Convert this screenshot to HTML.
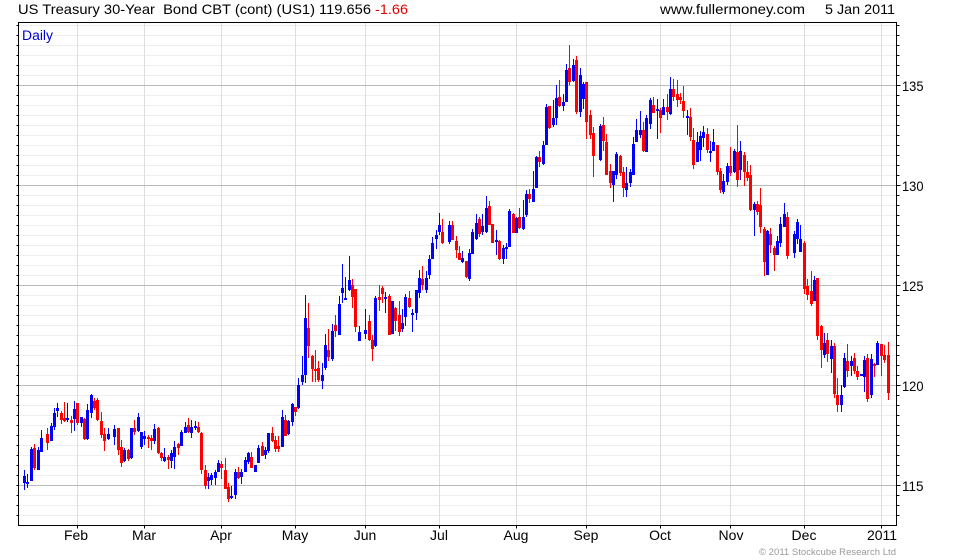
<!DOCTYPE html>
<html><head><meta charset="utf-8"><title>US Treasury 30-Year Bond</title>
<style>html,body{margin:0;padding:0;background:#fff}svg{display:block}text{font-family:"Liberation Sans",Arial,sans-serif;font-size:14px;fill:#000}</style></head>
<body>
<svg width="980" height="560" viewBox="0 0 980 560" xmlns="http://www.w3.org/2000/svg">
<g shape-rendering="crispEdges" fill="none" transform="translate(.5 .5)">
<path stroke="#eee" d="M18 25H896M18 35H896M18 45H896M18 55H896M18 65H896M18 75H896M18 95H896M18 105H896M18 115H896M18 125H896M18 135H896M18 145H896M18 155H896M18 165H896M18 175H896M18 195H896M18 205H896M18 215H896M18 225H896M18 235H896M18 245H896M18 255H896M18 265H896M18 275H896M18 295H896M18 305H896M18 315H896M18 325H896M18 335H896M18 345H896M18 355H896M18 365H896M18 375H896M18 395H896M18 405H896M18 415H896M18 425H896M18 435H896M18 445H896M18 455H896M18 465H896M18 475H896M18 495H896M18 505H896M18 515H896"/>
<path stroke="#ddd" d="M77 22V525M144 22V525M221 22V525M295 22V525M365 22V525M439 22V525M516 22V525M586 22V525M660 22V525M730 22V525M804 22V525M881 22V525"/>
<path stroke="#bbb" d="M18 85H896M18 185H896M18 285H896M18 385H896M18 485H896"/>
<path stroke="#000" d="M18 22H896V525H18ZM77 525V528M144 525V528M221 525V528M295 525V528M365 525V528M439 525V528M516 525V528M586 525V528M660 525V528M730 525V528M804 525V528M881 525V528M16 25H18M16 35H18M16 45H18M16 55H18M16 65H18M16 75H18M16 85H18M16 95H18M16 105H18M16 115H18M16 125H18M16 135H18M16 145H18M16 155H18M16 165H18M16 175H18M16 185H18M16 195H18M16 205H18M16 215H18M16 225H18M16 235H18M16 245H18M16 255H18M16 265H18M16 275H18M16 285H18M16 295H18M16 305H18M16 315H18M16 325H18M16 335H18M16 345H18M16 355H18M16 365H18M16 375H18M16 385H18M16 395H18M16 405H18M16 415H18M16 425H18M16 435H18M16 445H18M16 455H18M16 465H18M16 475H18M16 485H18M16 495H18M16 505H18M16 515H18M896 25H899M896 35H899M896 45H899M896 55H899M896 65H899M896 75H899M896 85H900M896 95H899M896 105H899M896 115H899M896 125H899M896 135H899M896 145H899M896 155H899M896 165H899M896 175H899M896 185H900M896 195H899M896 205H899M896 215H899M896 225H899M896 235H899M896 245H899M896 255H899M896 265H899M896 275H899M896 285H900M896 295H899M896 305H899M896 315H899M896 325H899M896 335H899M896 345H899M896 355H899M896 365H899M896 375H899M896 385H900M896 395H899M896 405H899M896 415H899M896 425H899M896 435H899M896 445H899M896 455H899M896 465H899M896 475H899M896 485H900M896 495H899M896 505H899M896 515H899"/>
</g>
<g shape-rendering="crispEdges" fill="none" transform="translate(.5 0)">
<path stroke="#00f" stroke-width="1" d="M24 470V490M27 474V488M31 447V481M38 447V470M41 430V452M51 423V441M54 408V430M57 403V417M67 403V422M74 401V431M81 417V427M87 404V440M91 394V418M108 428V440M114 425V445M124 448V462M131 428V459M138 413V432M141 432V449M144 431V445M154 424V444M164 448V462M171 450V468M174 441V469M181 430V446M185 422V433M191 420V438M195 421V430M208 473V489M211 473V485M215 470V485M218 460V472M231 486V499M235 469V499M241 469V484M245 457V472M248 452V464M255 465V472M258 445V463M265 447V459M268 433V453M282 410V447M288 420V435M292 403V426M298 378V409M302 356V385M305 295V383M322 363V389M325 334V370M332 324V361M339 296V335M342 264V303M345 277V300M349 256V291M359 326V341M365 309V339M375 296V347M385 292V313M392 301V334M402 309V332M405 294V326M412 309V332M416 290V320M419 270V298M426 271V293M429 255V279M432 237V259M436 230V249M439 213V235M449 221V244M462 251V263M469 249V281M472 229V254M476 214V240M482 214V235M486 196V233M496 230V255M503 245V264M506 243V259M509 209V247M516 217V233M523 200V230M526 190V217M533 171V202M536 156V188M543 141V165M546 104V145M553 100V127M556 85V125M563 94V111M566 64V102M573 59V82M580 68V117M583 82V109M600 124V161M613 171V202M616 152V179M626 167V197M630 169V187M633 137V175M636 119V142M640 111V138M646 115V152M650 98V129M657 99V139M663 99V115M670 77V115M687 110V135M697 132V162M700 131V161M703 126V147M710 141V162M713 129V151M723 174V194M727 163V185M734 149V173M740 141V180M754 202V236M767 230V275M777 236V255M780 217V247M784 203V227M794 231V258M797 219V244M800 225V252M814 276V301M824 333V358M831 340V373M841 385V412M844 353V388M851 356V376M864 356V392M871 354V398M877 341V365"/>
<path stroke="#00f" stroke-width="3" d="M24 476V483M27 482V484M31 449V481M38 450V470M41 438V452M51 426V441M54 413V427M57 408V411M67 418V420M74 409V419M81 417V423M87 410V439M91 395V413M108 434V439M114 429V437M124 450V461M131 428V458M138 417V431M141 432V447M144 436V439M154 429V441M164 457V461M171 453V461M174 447V457M181 432V446M185 427V433M191 427V433M195 426V428M208 477V481M211 475V480M215 472V478M218 463V472M231 496V498M235 472V495M241 472V477M245 460V472M248 453V462M255 465V472M258 448V463M265 450V455M268 433V451M282 417V447M288 421V434M292 404V422M298 385V408M302 375V382M305 318V375M322 375V381M325 345V368M332 331V359M339 304V335M342 288V293M345 298V300M349 280V290M359 332V341M365 330V334M375 298V346M385 297V299M392 301V334M402 323V329M405 297V317M412 313V315M416 290V313M419 278V293M426 278V290M429 259V275M432 243V259M436 235V239M439 225V232M449 225V242M462 258V262M469 253V279M472 232V254M476 223V239M482 226V232M486 208V232M496 240V242M503 248V259M506 247V249M509 211V247M516 218V233M523 217V229M526 194V215M533 189V202M536 157V188M543 145V164M546 107V145M553 118V125M556 98V118M563 102V106M566 70V102M573 65V81M580 75V112M583 84V99M600 126V160M613 171V185M616 154V175M626 183V190M630 172V183M633 144V175M636 130V142M640 130V135M646 118V152M650 100V124M657 109V111M663 107V115M670 89V114M687 116V118M697 142V162M700 136V150M703 132V138M710 151V153M713 142V151M723 181V192M727 166V182M734 151V172M740 151V170M754 204V210M767 231V275M777 241V255M780 224V243M784 214V227M794 234V253M797 222V239M800 239V252M814 280V301M824 343V355M831 346V359M841 395V405M844 358V387M851 361V366M861 374V376M864 360V377M871 359V395M877 343V365"/>
<path stroke="#f00" stroke-width="1" d="M34 444V470M47 428V450M61 411V424M64 402V422M71 416V433M77 403V425M84 418V440M94 398V410M97 398V421M101 412V438M104 428V451M118 428V455M121 440V467M128 449V461M134 420V435M148 435V448M151 435V450M158 427V454M161 452V461M168 455V469M178 443V455M188 418V433M198 422V433M201 432V474M205 465V489M221 461V479M225 458V489M228 483V502M238 467V479M251 452V468M262 442V456M272 427V442M275 436V452M278 436V452M285 415V436M295 407V416M308 303V358M312 355V382M315 350V382M318 361V382M328 329V361M335 315V337M352 279V308M355 289V332M369 315V341M372 335V361M379 285V311M382 286V303M389 294V335M395 307V331M399 301V336M409 291V308M422 266V290M442 219V244M452 221V240M456 236V258M459 246V260M466 261V278M479 217V237M489 201V225M492 224V243M499 240V260M513 213V233M519 208V229M529 189V203M539 151V167M549 106V129M559 80V107M569 45V85M576 56V114M586 82V139M590 110V139M593 127V177M603 117V151M606 134V175M610 164V188M620 155V176M623 167V197M643 122V152M653 97V113M660 108V133M667 94V120M673 79V101M677 80V107M680 93V104M683 86V118M690 108V141M693 128V169M707 128V153M717 145V175M720 168V193M730 147V176M737 125V187M744 152V186M747 161V181M750 165V211M757 201V215M760 188V233M764 227V276M770 228V253M774 246V271M787 212V259M804 241V294M807 279V300M811 271V306M817 278V340M821 325V368M827 333V362M834 343V398M837 378V412M847 344V377M854 353V374M857 366V380M867 354V402M874 363V377M881 344V376M884 345V363M888 342V400"/>
<path stroke="#f00" stroke-width="3" d="M34 448V468M47 434V443M61 413V420M64 418V421M71 420V423M77 403V423M84 419V439M94 401V408M97 400V420M101 421V435M104 434V441M118 428V450M121 447V463M128 450V459M134 428V432M148 437V439M151 438V441M158 428V453M161 453V458M168 457V460M178 444V448M188 425V432M198 427V432M201 433V470M205 470V486M221 464V468M225 470V489M228 487V499M238 472V478M251 457V468M262 446V456M272 433V441M275 440V449M278 446V449M285 420V436M295 407V412M308 328V346M312 356V369M315 369V371M318 368V380M328 350V357M335 325V331M352 285V297M355 289V327M369 321V340M372 340V349M379 297V300M382 288V294M389 296V335M395 308V321M399 315V332M409 298V307M422 279V285M442 232V243M452 225V240M456 241V250M459 253V260M466 261V277M479 219V234M489 206V225M492 224V243M499 241V259M513 214V233M519 217V228M529 194V199M539 157V162M549 106V128M559 97V106M569 68V82M576 60V112M586 82V122M590 115V135M593 133V156M603 125V141M606 142V175M610 171V183M620 156V173M623 172V188M643 130V151M653 105V113M660 110V118M667 107V112M673 89V97M677 94V100M680 97V100M683 101V111M690 117V137M693 140V165M707 134V150M717 145V172M720 171V190M730 166V173M737 152V180M744 155V172M747 172V178M750 175V210M757 204V212M760 205V227M764 229V262M770 234V245M774 248V255M787 217V256M804 243V289M807 286V295M811 291V304M817 278V336M821 326V350M827 340V354M834 346V394M837 395V405M847 361V371M854 358V371M857 371V377M867 358V399M874 364V366M881 344V356M884 355V360M888 355V393"/>
</g>
<text x="18" y="14" xml:space="preserve" textLength="297" lengthAdjust="spacingAndGlyphs">US Treasury 30-Year  Bond CBT (cont) (US1)</text>
<text x="319" y="14" textLength="52" lengthAdjust="spacingAndGlyphs">119.656</text>
<text x="375" y="14" textLength="33" lengthAdjust="spacingAndGlyphs" style="fill:#e00000">-1.66</text>
<text x="660" y="14" textLength="145" lengthAdjust="spacingAndGlyphs">www.fullermoney.com</text>
<text x="825" y="14" textLength="70" lengthAdjust="spacingAndGlyphs">5 Jan 2011</text>
<text x="22" y="40" textLength="31" lengthAdjust="spacingAndGlyphs" style="fill:#0000d0;font-size:13.5px">Daily</text>
<g>
<text x="902" y="91" textLength="21.5" lengthAdjust="spacingAndGlyphs">135</text>
<text x="902" y="191" textLength="21.5" lengthAdjust="spacingAndGlyphs">130</text>
<text x="902" y="291" textLength="21.5" lengthAdjust="spacingAndGlyphs">125</text>
<text x="902" y="391" textLength="21.5" lengthAdjust="spacingAndGlyphs">120</text>
<text x="902" y="491" textLength="21.5" lengthAdjust="spacingAndGlyphs">115</text>
</g>
<g text-anchor="middle">
<text x="76" y="540">Feb</text>
<text x="144" y="540">Mar</text>
<text x="221" y="540">Apr</text>
<text x="295" y="540">May</text>
<text x="365" y="540">Jun</text>
<text x="439" y="540">Jul</text>
<text x="516" y="540">Aug</text>
<text x="586" y="540">Sep</text>
<text x="660" y="540">Oct</text>
<text x="731" y="540">Nov</text>
<text x="804" y="540">Dec</text>
<text x="882" y="540">2011</text>
</g>
<text x="759" y="555" textLength="137" lengthAdjust="spacing" style="font-size:9.5px;fill:#999">© 2011 Stockcube Research Ltd</text>
</svg>
</body></html>
